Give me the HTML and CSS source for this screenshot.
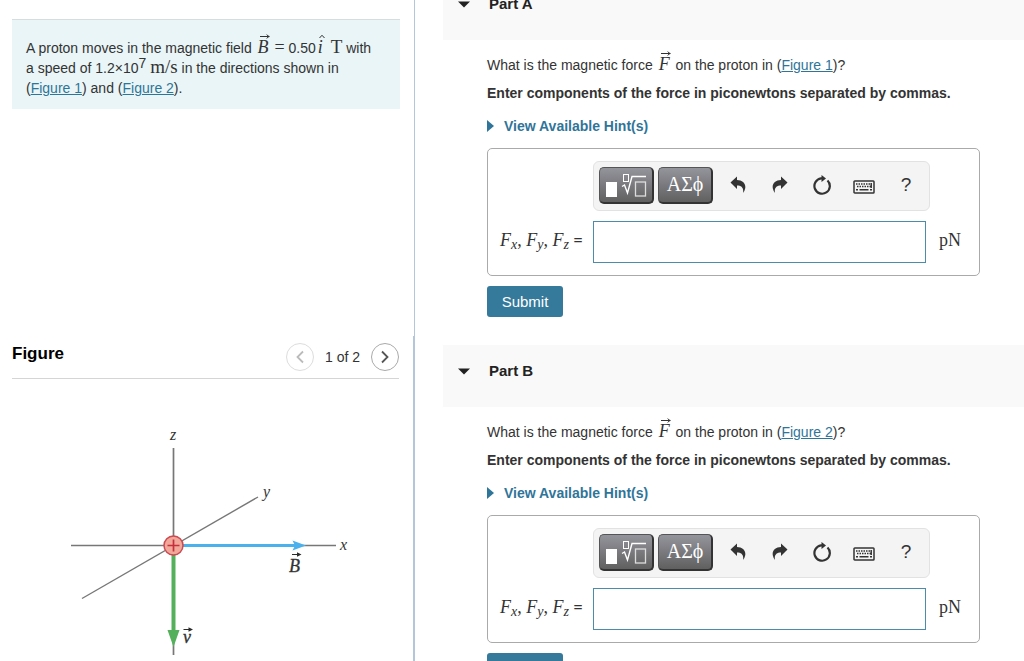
FILE: index.html
```html
<!DOCTYPE html>
<html lang="en">
<head>
<meta charset="utf-8">
<title>Magnetic force on a proton</title>
<link rel="stylesheet" href="styles.css">
</head>
<body>
<svg class="sprites" aria-hidden="true">
  <symbol id="vec" viewBox="0 0 8 4"><path d="M0 2H7.2M5.4 .4Q5.900 1.700 7.500 2Q5.900 2.300 5.400 3.600" fill="none" stroke="currentColor" stroke-width=".8"/></symbol>
  <symbol id="hat" viewBox="0 0 8 4"><path d="M2 3.200L4 1L6 3.200" fill="none" stroke="currentColor" stroke-width=".8"/></symbol>
  <symbol id="root" viewBox="0 0 42 26">
    <rect x="1" y="10" width="11" height="15" fill="#fff"/>
    <rect x="18.500" y="2.500" width="5" height="7" fill="none" stroke="#fff"/>
    <path d="M17 14.500l2.500-1.500 3 8L27 4.500H41" fill="none" stroke="#fff" stroke-width="1.400"/>
    <rect x="30.500" y="10" width="10" height="14" fill="none" stroke="#ddd" stroke-width="1.300"/>
  </symbol>
  <symbol id="undo" viewBox="0 0 16 18"><path d="M.5 6.500L7 .5V4C13 4 16.500 8.500 15 13Q14.500 15.500 13 17C14 12 11.500 9.500 7 9.500V13z" fill="#333"/></symbol>
  <symbol id="reset" viewBox="0 0 20 20"><path d="M15.500 5.500A7.700 7.700 0 1 1 9 3.400H11" fill="none" stroke="#333" stroke-width="2.200"/><path d="M9.500 0L14 3.500L9.500 7z" fill="#333"/></symbol>
  <symbol id="keys" viewBox="0 0 22 14">
    <rect x="1" y="1" width="20" height="12" rx=".8" fill="#f4f4f4" stroke="#333" stroke-width="1.500"/>
    <path d="M3 4H18M4 6.500H18" stroke="#333" stroke-width="1.600" stroke-dasharray="1.500 1"/>
    <path d="M3 9.700h2M6.500 9.700h9M17 9.700h2M18.200 3v5" stroke="#333" stroke-width="1.500"/>
  </symbol>
</svg>
<div class="page">
  <div class="left">
    <section class="problem">
      <p class="statement">A proton moves in the magnetic field <span class="math accented"><i>B</i><svg class="accent"><use href="#vec"/></svg></span> <span class="math equals">=</span> 0.50<span class="math accented hat"><i>i</i><svg class="accent"><use href="#hat"/></svg></span> <span class="math unit-t">T</span> with a&nbsp;speed of 1.2×10<sup>7</sup> <span class="math speed">m/s</span> in the directions shown in (<a href="#figure">Figure 1</a>) and (<a href="#figure">Figure 2</a>).</p>
    </section>
    <section class="figure" id="figure">
      <header class="figure-head">
        <h2>Figure</h2>
        <button class="round" type="button" aria-label="Previous figure" disabled><svg viewBox="0 0 10 14"><path d="M8 1.500L2.500 7L8 12.500"/></svg></button>
        <span class="count">1 of 2</span>
        <button class="round" type="button" aria-label="Next figure"><svg viewBox="0 0 10 14"><path d="M2 1.500L7.500 7L2 12.500"/></svg></button>
      </header>
      <svg class="diagram" viewBox="0 0 310 241" role="img" aria-label="Axes x, y, z with field B along x and velocity v along negative z">
        <g stroke="#777" stroke-width="1.700" fill="none">
          <path d="M113.500 28V235M11 125.500H276"/><path d="M22 178.500L198 77" stroke-width="1.400"/>
        </g>
        <path d="M122 125.500H236" stroke="#4bb1ec" stroke-width="3"/>
        <path d="M246 125.500L232.500 120.500L235 125.500L232.500 130.500z" fill="#4bb1ec"/>
        <path d="M113.500 134V212" stroke="#55b05c" stroke-width="4"/>
        <path d="M107.500 210H119.500L113.500 227z" fill="#55b05c"/>
        <circle cx="113.500" cy="125.500" r="9.500" fill="#f2a79b" stroke="#cc4a52" stroke-width="1.500"/>
        <path d="M107.500 125.500h12M113.500 119.500v12" stroke="#c5303c" stroke-width="1.700"/>
        <g class="axis-label">
          <text x="110" y="20">z</text>
          <text x="203" y="77">y</text>
          <text x="280" y="130">x</text>
          <text x="229" y="152" class="strong">B</text>
          <text x="123" y="223" class="strong">v</text>
        </g>
        <g stroke="#2b2b2b" fill="#2b2b2b">
          <path d="M232 134.500h6M123.500 209.500h6" stroke-width="1"/>
          <path d="M237 132.300l4.500 2.200l-4.500 2.200zM128.500 207.300l4.500 2.200l-4.500 2.200z" stroke="none"/>
        </g>
      </svg>
    </section>
  </div>
  <main class="right">
    <section class="part">
      <header class="part-head"><svg class="caret" viewBox="0 0 12 7"><path d="M0 .5H12L6 6.500z"/></svg><h2>Part A</h2></header>
      <div class="part-body">
        <p class="question">What is the magnetic force <span class="math accented"><i>F</i><svg class="accent"><use href="#vec"/></svg></span> on the proton in (<a href="#figure">Figure 1</a>)?</p>
        <p class="instruction">Enter components of the force in piconewtons separated by commas.</p>
        <button class="hints" type="button"><svg viewBox="0 0 7 12"><path d="M0 0L7 6L0 12z"/></svg>View Available Hint(s)</button>
        <div class="answer">
          <div class="toolbar">
            <button class="dark" type="button" aria-label="Templates"><svg class="i-root"><use href="#root"/></svg></button>
            <button class="dark" type="button">ΑΣϕ</button>
            <button class="tool" type="button" aria-label="Undo"><svg class="i-undo"><use href="#undo"/></svg></button>
            <button class="tool" type="button" aria-label="Redo"><svg class="i-undo flip"><use href="#undo"/></svg></button>
            <button class="tool" type="button" aria-label="Reset"><svg class="i-reset"><use href="#reset"/></svg></button>
            <button class="tool" type="button" aria-label="Keyboard shortcuts"><svg class="i-keys"><use href="#keys"/></svg></button>
            <button class="tool" type="button">?</button>
          </div>
          <label class="math" for="answer-a"><i>F<sub>x</sub></i>, <i>F<sub>y</sub></i>, <i>F<sub>z</sub></i> <b>=</b></label>
          <input id="answer-a" type="text">
          <span class="math unit">pN</span>
        </div>
        <button class="submit" type="submit">Submit</button>
      </div>
    </section>
    <section class="part">
      <header class="part-head"><svg class="caret" viewBox="0 0 12 7"><path d="M0 .5H12L6 6.500z"/></svg><h2>Part B</h2></header>
      <div class="part-body">
        <p class="question">What is the magnetic force <span class="math accented"><i>F</i><svg class="accent"><use href="#vec"/></svg></span> on the proton in (<a href="#figure">Figure 2</a>)?</p>
        <p class="instruction">Enter components of the force in piconewtons separated by commas.</p>
        <button class="hints" type="button"><svg viewBox="0 0 7 12"><path d="M0 0L7 6L0 12z"/></svg>View Available Hint(s)</button>
        <div class="answer">
          <div class="toolbar">
            <button class="dark" type="button" aria-label="Templates"><svg class="i-root"><use href="#root"/></svg></button>
            <button class="dark" type="button">ΑΣϕ</button>
            <button class="tool" type="button" aria-label="Undo"><svg class="i-undo"><use href="#undo"/></svg></button>
            <button class="tool" type="button" aria-label="Redo"><svg class="i-undo flip"><use href="#undo"/></svg></button>
            <button class="tool" type="button" aria-label="Reset"><svg class="i-reset"><use href="#reset"/></svg></button>
            <button class="tool" type="button" aria-label="Keyboard shortcuts"><svg class="i-keys"><use href="#keys"/></svg></button>
            <button class="tool" type="button">?</button>
          </div>
          <label class="math" for="answer-b"><i>F<sub>x</sub></i>, <i>F<sub>y</sub></i>, <i>F<sub>z</sub></i> <b>=</b></label>
          <input id="answer-b" type="text">
          <span class="math unit">pN</span>
        </div>
        <button class="submit" type="submit">Submit</button>
      </div>
    </section>
  </main>
</div>
</body>
</html>
```
FILE: styles.css
```css
* { box-sizing: border-box; }
body {
  margin: 0;
  color: #333;
  background: #fff;
  font: 14px/20px "Liberation Sans", Arial, sans-serif;
}
h2, p { margin: 0; }
button { margin: 0; padding: 0; border: 0; background: none; font: inherit; color: inherit; }
a { color: #2f7599; }
.sprites { position: absolute; width: 0; height: 0; }

.page {
  display: grid;
  grid-template-columns: minmax(0, 415fr) minmax(0, 609fr);
  height: 100vh;
  overflow: hidden;
}
.left {
  display: grid;
  grid-template-rows: minmax(0, 336fr) minmax(0, 325fr);
  min-height: 0;
  border-right: 1px solid #b4c6d9;
}
.problem { padding: 19px 14px 0 12px; }
.statement {
  padding: 18px 20px 11px 14px;
  border-top: 1px solid #d5dedc;
  background: #e9f5f7;
}
.statement a { white-space: nowrap; }
.statement sup { font-size: 14px; line-height: 0; vertical-align: 5px; }

.math { font-family: "Liberation Serif", "Times New Roman", serif; font-size: 18px; line-height: 1; }
.accented { position: relative; display: inline-block; margin: 0 2px; }
.accent { position: absolute; left: 2px; top: -4px; width: 10px; height: 5px; }
.hat { margin-right: 4px; }
.hat .accent { left: -1px; }
.statement .equals, .statement .unit-t, .statement .speed { line-height: 0; }
.statement .unit-t, .statement .speed { font-size: 19px; }

.figure { min-height: 0; overflow: hidden; padding: 0 14px 0 12px; border-right: 1px solid #b4c6d9; }
.figure-head {
  display: flex;
  align-items: center;
  height: 43px;
  border-bottom: 1px solid #d5d5d5;
}
.figure-head h2 { flex: 1; padding-bottom: 6px; color: #000; font-size: 17px; }
.count { margin: 0 11px; }
.round {
  display: grid;
  place-items: center;
  width: 28px;
  height: 28px;
  border: 1px solid #aaa;
  border-radius: 50%;
}
.round svg { width: 10px; height: 14px; fill: none; stroke: #555; stroke-width: 1.8; }
.round:disabled { border-color: #ddd; }
.round:disabled svg { stroke: #bbb; }
.diagram { display: block; width: 310px; height: 241px; margin: 41px 0 0 48px; }
.axis-label { font: italic 16px "Liberation Serif", serif; fill: #333; }
.axis-label .strong { font-size: 18px; stroke: #333; stroke-width: .3px; }

.right { min-height: 0; overflow: hidden; padding-left: 28px; }
.part:first-child { margin-top: -22px; }
.part { margin-bottom: 28px; }
.part-head {
  display: flex;
  align-items: center;
  gap: 19px;
  height: 62px;
  padding: 0 15px 10px;
  background: #f9f9f9;
}
.part-head h2 { color: #222; font-size: 15px; }
.caret { width: 12px; height: 7px; fill: #222; }
.part-body { display: flex; flex-direction: column; align-items: flex-start; padding: 12px 44px 0; }
.question { line-height: 26px; }
.instruction { margin-top: 5px; font-weight: bold; }
.hints { display: flex; align-items: center; gap: 10px; margin-top: 13px; color: #2f7599; font-weight: bold; }
.hints svg { width: 7px; height: 12px; fill: currentColor; }

.answer {
  display: grid;
  grid-template-columns: 93px minmax(0, 1fr) 41px;
  row-gap: 10px;
  align-self: stretch;
  align-items: center;
  margin-top: 12px;
  padding: 12px;
  border: 1px solid #aaa;
  border-radius: 5px;
}
.toolbar {
  grid-column: 2 / 4;
  justify-self: start;
  display: flex;
  align-items: center;
  height: 50px;
  padding: 0 2px 2px 5px;
  border: 1px solid #e2e2e2;
  border-radius: 6px;
  background: #f4f4f4;
}
.dark {
  display: grid;
  place-items: center;
  width: 55px;
  height: 37px;
  margin-right: 4px;
  border: 1px solid #555;
  border-right: 2px solid #333;
  border-bottom: 2px solid #333;
  border-radius: 5px;
  background: linear-gradient(#94949c, #606060);
  color: #fff;
  font: 20px "Liberation Serif", serif;
}
.tool { display: grid; place-items: center; width: 42px; height: 37px; font-size: 19px; }
.i-root { width: 42px; height: 26px; }
.i-undo { width: 16px; height: 18px; }
.flip { transform: scaleX(-1); }
.i-reset { width: 20px; height: 20px; }
.i-keys { width: 22px; height: 14px; margin-top: 4px; }
.answer label, .unit { padding-bottom: 4px; }
.answer sub { font-size: 14px; line-height: 0; vertical-align: -3px; }
.answer b { font-size: 16px; }
.answer input { width: 100%; height: 42px; padding: 0 8px; border: 1px solid #4c8ba9; font: inherit; }
.unit { padding-left: 13px; }
.submit {
  width: 76px;
  height: 31px;
  margin-top: 10px;
  border-radius: 3px;
  background: #35799b;
  color: #fff;
  font-size: 15px;
}
```
